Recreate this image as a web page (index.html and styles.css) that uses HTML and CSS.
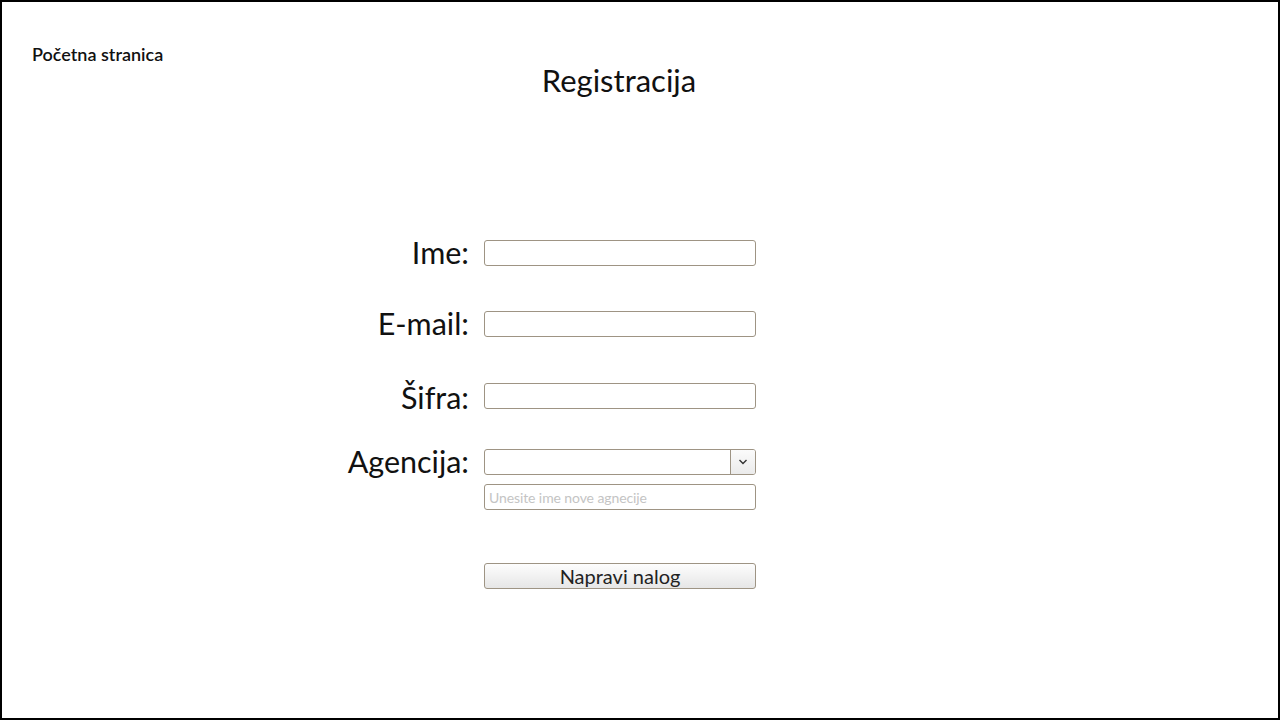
FILE: index.html
```html
<!DOCTYPE html>
<html lang="sr">
<head>
<meta charset="utf-8">
<title>Registracija</title>
<link rel="stylesheet" href="styles.css">
</head>
<body>
<div class="page">
  <header class="top">
    <a class="home" href="#">Početna stranica</a>
  </header>
  <h1 class="title">Registracija</h1>
  <form class="form">
    <div class="row r1">
      <label class="lbl">Ime:</label>
      <input class="field" type="text">
    </div>
    <div class="row r2">
      <label class="lbl">E-mail:</label>
      <input class="field" type="text">
    </div>
    <div class="row r3">
      <label class="lbl">Šifra:</label>
      <input class="field" type="password">
    </div>
    <div class="row r4">
      <label class="lbl">Agencija:</label>
      <div class="stack">
        <div class="select">
          <span class="sel-val"></span>
          <span class="sel-btn">
            <svg width="10" height="6" viewBox="0 0 10 6"><path d="M1.5 1 L5 4.5 L8.5 1" fill="none" stroke="#333" stroke-width="1.4"/></svg>
          </span>
        </div>
        <input class="field small" type="text" placeholder="Unesite ime nove agnecije">
      </div>
    </div>
    <div class="row r5">
      <span class="lbl"></span>
      <button class="btn" type="button">Napravi nalog</button>
    </div>
  </form>
</div>
</body>
</html>
```
FILE: styles.css
```css
html, body {
  margin: 0;
  padding: 0;
  background: #fff;
}
body {
  font-family: Lato, "Open Sans", sans-serif;
  color: #111;
}
.page {
  box-sizing: border-box;
  width: 1280px;
  height: 720px;
  border: 2px solid #000;
  overflow: hidden;
}
.top {
  padding: 40px 0 0 30px;
  height: 24px;
}
.home {
  font-size: 18px;
  font-weight: 600;
  color: #111;
  text-decoration: none;
  line-height: 24px;
}
.title {
  margin: 0;
  font-weight: 400;
  font-size: 31px;
  line-height: 36px;
  text-align: center;
  padding-right: 42px;
  margin-top: -4px;
}
.form {
  margin-left: 267px;
  margin-top: 142px;
}
.row {
  display: flex;
  align-items: flex-start;
  column-gap: 15px;
}
.lbl {
  width: 200px;
  text-align: right;
  font-size: 30.5px;
  line-height: 26px;
  height: 26px;
  box-sizing: border-box;
}
.r2 { margin-top: 45px; }
.r3 { margin-top: 46px; }
.r4 { margin-top: 39px; }
.r5 { margin-top: 53px; }
.r1 .lbl { margin-top: -1px; }
.r2 .lbl { margin-top: -1px; }
.r3 .lbl { margin-top: 1px; }
.r4 .lbl { margin-top: -1px; }
.field {
  box-sizing: border-box;
  width: 272px;
  height: 26px;
  margin: 0;
  border: 1px solid #9e9484;
  border-radius: 3px;
  background: #fff;
  font-family: Lato, sans-serif;
  padding: 0 4px;
  outline: none;
}
.field.small {
  font-size: 14px;
  letter-spacing: -0.1px;
  padding: 0 4px;
}
.field.small::placeholder {
  color: #c4c4c4;
}
.stack {
  display: flex;
  flex-direction: column;
  row-gap: 9px;
}
.select {
  box-sizing: border-box;
  width: 272px;
  height: 26px;
  border: 1px solid #9e9484;
  border-radius: 3px;
  display: flex;
  overflow: hidden;
  background: #fff;
}
.sel-val {
  flex: 1;
}
.sel-btn {
  width: 24px;
  border-left: 1px solid #9e9484;
  background: linear-gradient(#fbfbfb, #ebebeb);
  display: flex;
  align-items: center;
  justify-content: center;
}
.btn {
  box-sizing: border-box;
  width: 272px;
  height: 26px;
  border: 1px solid #9e9484;
  border-radius: 3px;
  background: linear-gradient(#fdfdfd, #e6e6e6);
  font-family: Lato, sans-serif;
  font-size: 20px;
  color: #222;
  padding: 0;
  line-height: 24px;
}
```
